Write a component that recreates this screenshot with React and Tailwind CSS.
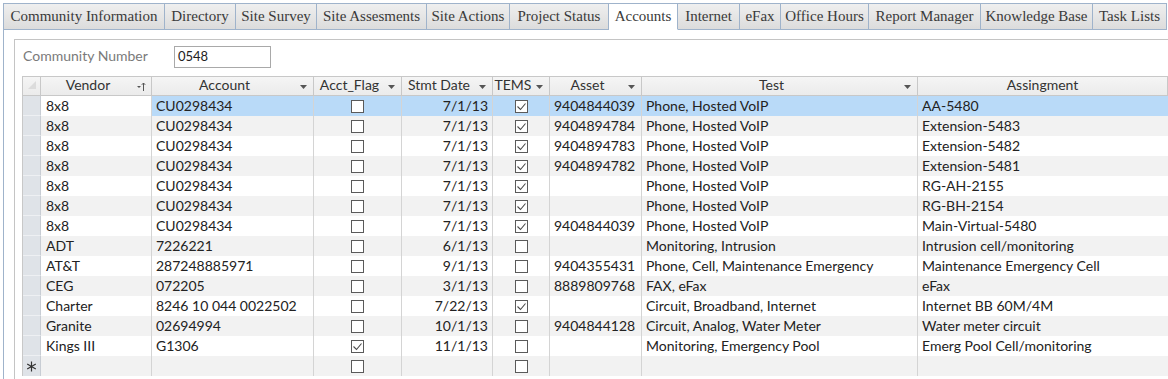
const tabs = [
  ['Community Information', 162],
  ['Directory', 71],
  ['Site Survey', 81],
  ['Site Assesments', 110],
  ['Site Actions', 83],
  ['Project Status', 99],
  ['Accounts', 69],
  ['Internet', 62],
  ['eFax', 41],
  ['Office Hours', 88],
  ['Report Manager', 112],
  ['Knowledge Base', 112],
  ['Task Lists', 74],
]

const rows = [
  ['8x8', 'CU0298434', false, '7/1/13', true, '9404844039', 'Phone, Hosted VoIP', 'AA-5480'],
  ['8x8', 'CU0298434', false, '7/1/13', true, '9404894784', 'Phone, Hosted VoIP', 'Extension-5483'],
  ['8x8', 'CU0298434', false, '7/1/13', true, '9404894783', 'Phone, Hosted VoIP', 'Extension-5482'],
  ['8x8', 'CU0298434', false, '7/1/13', true, '9404894782', 'Phone, Hosted VoIP', 'Extension-5481'],
  ['8x8', 'CU0298434', false, '7/1/13', true, '', 'Phone, Hosted VoIP', 'RG-AH-2155'],
  ['8x8', 'CU0298434', false, '7/1/13', true, '', 'Phone, Hosted VoIP', 'RG-BH-2154'],
  ['8x8', 'CU0298434', false, '7/1/13', true, '9404844039', 'Phone, Hosted VoIP', 'Main-Virtual-5480'],
  ['ADT', '7226221', false, '6/1/13', false, '', 'Monitoring, Intrusion', 'Intrusion cell/monitoring'],
  ['AT&T', '287248885971', false, '9/1/13', false, '9404355431', 'Phone, Cell, Maintenance Emergency', 'Maintenance Emergency Cell'],
  ['CEG', '072205', false, '3/1/13', false, '8889809768', 'FAX, eFax', 'eFax'],
  ['Charter', '8246 10 044 0022502', false, '7/22/13', true, '', 'Circuit, Broadband, Internet', 'Internet BB 60M/4M'],
  ['Granite', '02694994', false, '10/1/13', false, '9404844128', 'Circuit, Analog, Water Meter', 'Water meter circuit'],
  ['Kings III', 'G1306', true, '11/1/13', false, '', 'Monitoring, Emergency Pool', 'Emerg Pool Cell/monitoring'],
]

const cols = 'grid grid-cols-[18px_111px_162px_88px_91px_57px_92px_276px_1fr]'

function Check({ on }) {
  return (
    <span className="flex h-[13px] w-[13px] items-center justify-center border border-[#5a5a5a] bg-white">
      {on && (
        <svg width="11" height="11" viewBox="0 0 11 11">
          <path d="M1.5 5.5 L4.5 8.5 L9.5 2.5" fill="none" stroke="#4a4a4a" strokeWidth="1.1" />
        </svg>
      )}
    </span>
  )
}

function Arrow() {
  return (
    <svg width="7" height="4" viewBox="0 0 7 4" className="absolute right-[6px] top-[8px]">
      <path d="M0 0 H7 L3.5 4 Z" fill="#555" />
    </svg>
  )
}

function Head({ label, arrow = true, sorted }) {
  return (
    <div className={`relative flex items-center justify-center border-r border-[#c8c8c8] pb-[3px] leading-none ${arrow ? 'pr-[16px]' : ''}`}>
      <span>{label}</span>
      {arrow && !sorted && <Arrow />}
      {sorted && (
        <svg width="9" height="9" viewBox="0 0 9 9" className="absolute right-[5px] top-[5px]">
          <path d="M0 4 H4 L2 6 Z" fill="#555" />
          <path d="M6.5 9 V1 M4.8 2.8 L6.5 1 L8.2 2.8" fill="none" stroke="#555" strokeWidth="1" />
        </svg>
      )}
    </div>
  )
}

export default function App() {
  return (
    <div className="h-[379px] w-[1168px] overflow-hidden bg-white font-['Lato',sans-serif] text-[14px] text-[#222]">
      <div className="flex pl-[3px] pt-[3px]">
        {tabs.map(([name, w], i) => {
          const active = name === 'Accounts'
          return (
            <div
              key={name}
              style={{ width: w }}
              className={`flex h-[27px] items-center justify-center border-r border-t border-[#9fb3cb] font-['Liberation_Serif',serif] text-[15px] text-[#3a3a3a] ${
                i === 0 ? 'border-l' : ''
              } ${active ? 'border-b border-b-white bg-white' : 'border-b bg-gradient-to-b from-[#efefef] to-[#dcdcdc]'}`}
            >
              {name}
            </div>
          )
        })}
      </div>

      <div className="ml-[3px] h-[349px] border-l border-[#9fb3cb] pl-[10px] pt-[9px]">
        <div className="h-full border-l border-t border-[#c4c4c4] pl-[7px] pt-[6px]">
          <div className="flex h-[22px] items-center">
            <span className="ml-[1px] w-[151px] pb-[4px] text-[#7a7a7a]">Community Number</span>
            <div className="flex h-[22px] w-[97px] items-center border border-[#a9a9a9] pl-[3px] text-[13px]">0548</div>
          </div>

          <div className="mt-[8px] border-l border-[#c8c8c8]">
            <div className={`${cols} h-[20px] border-y border-[#c8c8c8] bg-gradient-to-b from-[#f5f5f5] to-[#ebebeb] text-[#333]`}>
              <div className="relative border-r border-[#c8c8c8]">
                <svg width="8" height="8" viewBox="0 0 8 8" className="absolute left-[5px] top-[4px]">
                  <path d="M0 8 L8 0 L8 8 Z" fill="#dcdcdc" />
                </svg>
              </div>
              <Head label="Vendor" sorted />
              <Head label="Account" />
              <Head label="Acct_Flag" />
              <Head label="Stmt Date" />
              <Head label="TEMS" />
              <Head label="Asset" />
              <Head label="Test" />
              <Head label="Assingment" arrow={false} />
            </div>

            {rows.map((r, i) => {
              const sel = i === 0
              const bg = sel ? 'bg-[#b9daf8]' : i % 2 ? 'bg-[#f2f2f2]' : 'bg-white'
              return (
                <div key={i} className={`${cols} h-[20px] ${bg} leading-[20px]`}>
                  <div className="border-r border-b border-[#c8cdd4] border-b-[#eef0f3] bg-[#dfe3e8]" />
                  <div className={`border-r border-[#d4d4d4] pl-[5px] ${sel ? 'bg-white' : ''}`}>{r[0]}</div>
                  <div className="border-r border-[#d4d4d4] pl-[4px]">{r[1]}</div>
                  <div className="flex items-center justify-center border-r border-[#d4d4d4]">
                    <Check on={r[2]} />
                  </div>
                  <div className="border-r border-[#d4d4d4] pr-[4px] text-right">{r[3]}</div>
                  <div className="flex items-center justify-center border-r border-[#d4d4d4]">
                    <Check on={r[4]} />
                  </div>
                  <div className="border-r border-[#d4d4d4] pl-[4px]">{r[5]}</div>
                  <div className="border-r border-[#d4d4d4] pl-[4px] whitespace-nowrap">{r[6]}</div>
                  <div className="pl-[4px] whitespace-nowrap">{r[7]}</div>
                </div>
              )
            })}

            <div className={`${cols} h-[20px] bg-[#f2f2f2]`}>
              <div className="flex items-center justify-center border-r border-[#c8cdd4] bg-[#dfe3e8]">
                <svg width="11" height="11" viewBox="0 0 11 11">
                  <path d="M5.5 0.5 V10.5 M1.2 3 L9.8 8 M1.2 8 L9.8 3" stroke="#333" strokeWidth="1.2" />
                </svg>
              </div>
              <div className="border-r border-[#d4d4d4]" />
              <div className="border-r border-[#d4d4d4]" />
              <div className="flex items-center justify-center border-r border-[#d4d4d4]">
                <Check />
              </div>
              <div className="border-r border-[#d4d4d4]" />
              <div className="flex items-center justify-center border-r border-[#d4d4d4]">
                <Check />
              </div>
              <div className="border-r border-[#d4d4d4]" />
              <div className="border-r border-[#d4d4d4]" />
              <div />
            </div>
          </div>
        </div>
      </div>
    </div>
  )
}
